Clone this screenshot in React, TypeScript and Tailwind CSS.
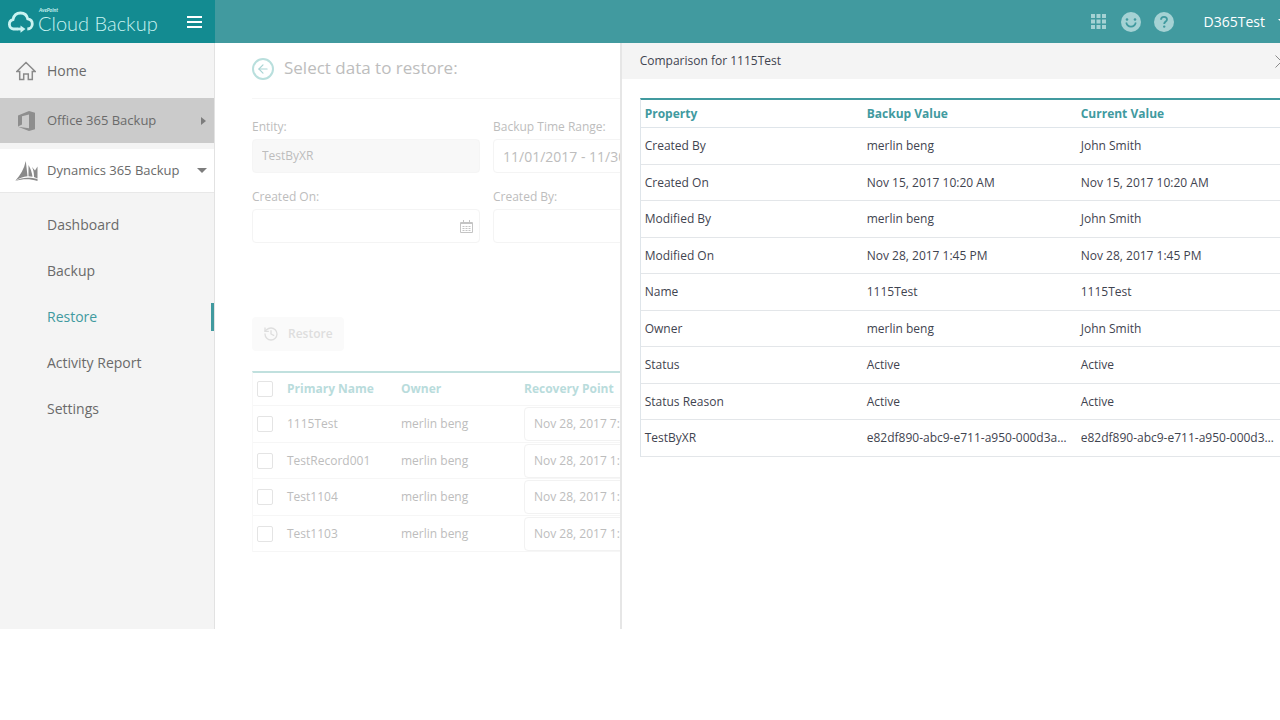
import { ArrowLeft, History } from 'lucide-react';

const subNav = ['Dashboard', 'Backup', 'Restore', 'Activity Report', 'Settings'];

const records = [
  { name: '1115Test', owner: 'merlin beng', point: 'Nov 28, 2017 7:30 AM' },
  { name: 'TestRecord001', owner: 'merlin beng', point: 'Nov 28, 2017 1:45 PM' },
  { name: 'Test1104', owner: 'merlin beng', point: 'Nov 28, 2017 1:45 PM' },
  { name: 'Test1103', owner: 'merlin beng', point: 'Nov 28, 2017 1:45 PM' },
];

const comparison = [
  { property: 'Created By', backup: 'merlin beng', current: 'John Smith' },
  { property: 'Created On', backup: 'Nov 15, 2017 10:20 AM', current: 'Nov 15, 2017 10:20 AM' },
  { property: 'Modified By', backup: 'merlin beng', current: 'John Smith' },
  { property: 'Modified On', backup: 'Nov 28, 2017 1:45 PM', current: 'Nov 28, 2017 1:45 PM' },
  { property: 'Name', backup: '1115Test', current: '1115Test' },
  { property: 'Owner', backup: 'merlin beng', current: 'John Smith' },
  { property: 'Status', backup: 'Active', current: 'Active' },
  { property: 'Status Reason', backup: 'Active', current: 'Active' },
  {
    property: 'TestByXR',
    backup: 'e82df890-abc9-e711-a950-000d3a1b2c3d',
    current: 'e82df890-abc9-e711-a950-000d3a1b2c3d',
  },
];

function Header() {
  return (
    <header className="flex h-[43px] bg-[#419a9f] text-white">
      <div className="flex w-[215px] shrink-0 items-center justify-between bg-[#138b91] pl-[7px] pr-[13px]">
        <a href="#" className="flex items-center gap-1 text-[#c9f3f1]">
          <svg className="h-[22px] w-[27px]" viewBox="0 0 27 22" fill="none" stroke="currentColor" strokeWidth="2.8">
            <path d="M10.500 18H6.500A4.800 4.800 0 0 1 6 8.600C6.800 4.500 9.500 2 13.500 2C17.300 2 20 4.300 20.700 7.800C23.500 8.200 25.300 10.300 25.300 13C25.300 15.800 23.300 18 20.300 18" />
            <path d="M10 18H15" />
            <path d="M13.500 14.500L18.500 18L13.500 21.800Z" fill="currentColor" stroke="none" />
          </svg>
          <span className="flex flex-col pb-1 font-['Lato']">
            <span className="pl-px text-[5px] leading-[6px] font-bold italic">AvePoint</span>
            <span className="text-xl leading-5 font-light">Cloud Backup</span>
          </span>
        </a>
        <button aria-label="Toggle menu" className="flex w-[15px] flex-col gap-[3px]">
          <span className="h-0.5 bg-white" />
          <span className="h-0.5 bg-white" />
          <span className="h-0.5 bg-white" />
        </button>
      </div>
      <div className="-mr-2 flex flex-1 items-center justify-end">
        <button aria-label="Apps" className="mr-[15px] text-[#a5d2d4]">
          <svg className="h-[15px] w-[15px]" viewBox="0 0 15 15" fill="currentColor">
            <path d="M0 0h4v4H0zM5.500 0h4v4h-4zM11 0h4v4h-4zM0 5.500h4v4H0zM5.500 5.500h4v4h-4zM11 5.500h4v4h-4zM0 11h4v4H0zM5.500 11h4v4h-4zM11 11h4v4h-4z" />
          </svg>
        </button>
        <button aria-label="Feedback" className="mr-[13px] text-[#a5d2d4]">
          <svg className="h-5 w-5" viewBox="0 0 20 20">
            <circle cx="10" cy="10" r="10" fill="currentColor" />
            <circle cx="6" cy="7.500" r="1.300" fill="#419a9f" />
            <circle cx="14" cy="7.500" r="1.300" fill="#419a9f" />
            <path d="M5.200 10.500C6.500 16 13.500 16 14.800 10.500" fill="none" stroke="#419a9f" strokeWidth="1.700" />
          </svg>
        </button>
        <button aria-label="Help" className="mr-[30px] text-[#a5d2d4]">
          <svg className="h-5 w-5" viewBox="0 0 20 20">
            <circle cx="10" cy="10" r="10" fill="currentColor" />
            <path d="M7 7.700C7 5.800 8.300 4.800 10 4.800C11.800 4.800 13 5.900 13 7.400C13 9.500 10.200 9.600 10.200 12" fill="none" stroke="#419a9f" strokeWidth="1.800" />
            <circle cx="10.200" cy="14.600" r="1.200" fill="#419a9f" />
          </svg>
        </button>
        <button className="flex items-center gap-[13px] text-sm">
          D365Test
          <span className="border-x-[5px] border-t-[5px] border-x-transparent border-t-white" />
        </button>
      </div>
    </header>
  );
}

function Sidebar() {
  return (
    <nav className="w-[215px] shrink-0 border-r border-[#e2e2e2] bg-[#f4f4f4] pb-[197px] text-sm text-[#6a6a6a]">
      <a href="#" className="flex h-[55px] items-center gap-[11px] pl-4">
        <svg className="h-5 w-5" viewBox="0 0 20 20" fill="none" stroke="#8a8a8a" strokeWidth="1.500">
          <path d="M.8 10.500L10 1.500L19.200 10.500H16.300V18.500H12.300V13H7.700V18.500H3.700V10.500Z" />
        </svg>
        Home
      </a>
      <a href="#" className="flex h-[45px] items-center bg-[#cbcbcb] pl-[18px] pr-2 text-[13px]">
        <svg className="mr-3 h-5 w-[17px]" viewBox="0 0 17 20" fill="#8e8e8e">
          <path d="M0 4.500L11 0L17 1.800V18.200L11 20L0 15.800L11 17.200V3.500L4 5.200V13.500L0 15.500Z" />
        </svg>
        <span className="flex-1">Office 365 Backup</span>
        <span className="border-y-4 border-l-[5px] border-y-transparent border-l-[#7d7d7d]" />
      </a>
      <a href="#" className="mt-[6px] flex h-[44px] items-center border-b border-[#e8e8e8] bg-white pl-[15px] pr-[7px] text-[13px]">
        <svg className="mr-[9px] h-5 w-[23px]" viewBox="0 0 23 20" fill="#8a8a8a">
          <path d="M10.800 0L12.500 15.200C8 15.600 4 17.200 .5 19.500C5.500 14 9 8 10.800 0Z" />
          <path d="M13.500 4C15.500 7.500 17 11.500 17.500 15.800L13.500 15.200Z" />
          <path d="M17 6C18.500 9 19 12 19 16L22.500 17.500V5.500L20 9.500Z" />
          <path d="M0 20C7 16.200 14 15.800 22.500 18V20C15 17.500 8 17.500 0 20Z" />
        </svg>
        <span className="flex-1">Dynamics 365 Backup</span>
        <span className="border-x-[5px] border-t-[5px] border-x-transparent border-t-[#7d7d7d]" />
      </a>
      <ul className="pt-[9px]">
        {subNav.map((item) => (
          <li key={item}>
            <a href="#" className="flex h-[46px] items-center justify-between pl-[47px]">
              <span className={item === 'Restore' ? 'text-[#419a9f]' : ''}>{item}</span>
              {item === 'Restore' && <span className="h-7 w-[3px] bg-[#419a9f]" />}
            </a>
          </li>
        ))}
      </ul>
    </nav>
  );
}

function RestoreForm() {
  return (
    <main className="min-w-0 flex-1 overflow-hidden pl-[37px] text-xs text-[#bdbdbd]">
      <div className="w-[800px]">
        <div className="flex h-14 items-center gap-[10px] border-b border-[#f6f6f6] pb-1">
          <button aria-label="Back" className="flex h-[22px] w-[22px] items-center justify-center rounded-full border-2 border-[#b9dfdd] text-[#a9d4d4]">
            <ArrowLeft className="h-[14px] w-[14px]" />
          </button>
          <h1 className="text-[17px]">Select data to restore:</h1>
        </div>

        <form className="grid grid-cols-[228px_228px] gap-x-[13px] gap-y-4 pt-5">
          <label className="flex flex-col gap-1">
            Entity:
            <select className="h-[34px] appearance-none rounded-sm border border-[#f5f5f5] bg-[#f8f8f8] px-[9px] text-xs">
              <option>TestByXR</option>
            </select>
          </label>
          <label className="flex flex-col gap-1">
            Backup Time Range:
            <input
              className="h-[34px] rounded-sm border border-[#f4f4f4] px-[9px] text-sm"
              defaultValue="11/01/2017 - 11/30/2017"
            />
          </label>
          <label className="flex flex-col gap-1">
            Created On:
            <span className="flex h-[34px] items-center rounded-sm border border-[#f4f4f4] pr-[6px]">
              <input className="min-w-0 flex-1" />
              <svg className="h-[13px] w-[13px]" viewBox="0 0 13 13" fill="none" stroke="#c4c4c4">
                <path d="M.5 2.500H12.500V12.500H.5ZM3.500 0V3.500M9.500 0V3.500M.5 3.500H12.500" />
                <path d="M2.500 6.500H11M2.500 8.500H11M2.500 10.500H11" strokeDasharray="2 1" />
              </svg>
            </span>
          </label>
          <label className="flex flex-col gap-1">
            Created By:
            <input className="h-[34px] rounded-sm border border-[#f4f4f4] px-[9px]" />
          </label>
        </form>

        <button className="mt-[74px] flex h-[34px] items-center gap-[9px] rounded-sm bg-[#fafafa] px-[11px] font-semibold text-[#dedede]">
          <History className="h-4 w-4" />
          Restore
        </button>

        <table className="mt-5 w-full table-fixed border-separate border-spacing-0 border-l border-t-2 border-l-[#f8f8f8] border-t-[#c0e0de] text-left">
          <thead>
            <tr className="h-[33px] text-[#b9dcdc]">
              <th className="w-[34px] border-b border-[#f6f6f6] pl-1">
                <input type="checkbox" aria-label="Select all" className="block h-4 w-4 appearance-none rounded-xs border border-[#e4e4e4]" />
              </th>
              <th className="w-[114px] border-b border-[#f6f6f6]">Primary Name</th>
              <th className="w-[123px] border-b border-[#f6f6f6]">Owner</th>
              <th className="border-b border-[#f6f6f6]">Recovery Point</th>
            </tr>
          </thead>
          <tbody>
            {records.map((record) => (
              <tr key={record.name} className="odd:h-[37px] even:h-[36px]">
                <td className="border-b border-[#f6f6f6] pl-1">
                  <input type="checkbox" aria-label={record.name} className="block h-4 w-4 appearance-none rounded-xs border border-[#e4e4e4]" />
                </td>
                <td className="border-b border-[#f6f6f6]">{record.name}</td>
                <td className="border-b border-[#f6f6f6]">{record.owner}</td>
                <td className="border-b border-[#f6f6f6]">
                  <select aria-label="Recovery point" className="block h-[34px] w-[200px] appearance-none rounded-sm border border-[#f2f2f2] px-[9px]">
                    <option>{record.point}</option>
                  </select>
                </td>
              </tr>
            ))}
          </tbody>
        </table>
      </div>
    </main>
  );
}

function ComparisonPanel() {
  return (
    <aside className="w-[62%] shrink-0 overflow-hidden border-l-2 border-[#e6e6e6] text-xs text-[#3f4450]">
      <div className="-mr-2 flex h-9 items-center justify-between bg-[#f4f4f4] pl-[18px]">
        <h2>Comparison for 1115Test</h2>
        <button aria-label="Close" className="text-[#8a8a8a]">
          <svg className="h-[13px] w-[13px]" viewBox="0 0 13 13" fill="none" stroke="currentColor">
            <path d="M.5 .5L12.500 12.500M12.500 .5L.5 12.500" />
          </svg>
        </button>
      </div>
      <div className="pl-[18px] pt-[19px]">
        <table className="w-full table-fixed border-separate border-spacing-0 border-l border-t-2 border-l-[#dfe5ea] border-t-[#419a9f] text-left">
          <thead>
            <tr className="h-7 text-[#419a9f]">
              <th className="w-[222px] border-b border-[#dfe5ea] pl-1">Property</th>
              <th className="w-[214px] border-b border-[#dfe5ea] pl-1">Backup Value</th>
              <th className="border-b border-[#dfe5ea] pl-1">Current Value</th>
            </tr>
          </thead>
          <tbody>
            {comparison.map((row) => (
              <tr key={row.property} className="odd:h-[37px] even:h-[36px]">
                <td className="border-b border-[#e3e6e9] pl-1">{row.property}</td>
                <td className="truncate border-b border-[#e3e6e9] pl-1 pr-2">{row.backup}</td>
                <td className="truncate border-b border-[#e3e6e9] pl-1">{row.current}</td>
              </tr>
            ))}
          </tbody>
        </table>
      </div>
    </aside>
  );
}

export default function App() {
  return (
    <div className="min-h-screen overflow-hidden bg-white font-['Open_Sans','Noto_Sans',sans-serif]">
      <Header />
      <div className="flex">
        <Sidebar />
        <div className="flex min-w-0 flex-1">
          <RestoreForm />
          <ComparisonPanel />
        </div>
      </div>
    </div>
  );
}
